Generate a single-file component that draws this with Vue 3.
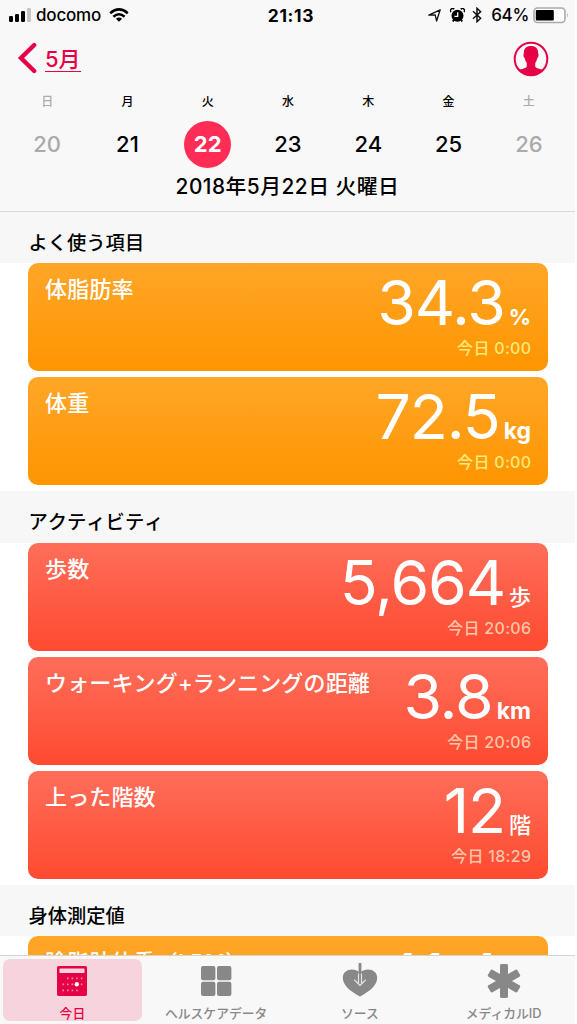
<script setup>
import { reactive } from "vue";

const days = reactive([
  { name: "日", date: 20, off: true },
  { name: "月", date: 21 },
  { name: "火", date: 22, selected: true },
  { name: "水", date: 23 },
  { name: "木", date: 24 },
  { name: "金", date: 25 },
  { name: "土", date: 26, off: true },
]);

const sections = reactive([
  {
    title: "よく使う項目",
    color: "orange",
    cards: [
      { title: "体脂肪率", value: "34.3", unit: "%", unitType: "percentUnit", time: "今日 0:00" },
      { title: "体重", value: "72.5", unit: "kg", unitType: "latin", time: "今日 0:00" },
    ],
  },
  {
    title: "アクティビティ",
    color: "red",
    cards: [
      { title: "歩数", value: "5,664", unit: "歩", time: "今日 20:06" },
      { title: "ウォーキング+ランニングの距離", value: "3.8", unit: "km", unitType: "latin", time: "今日 20:06" },
      { title: "上った階数", value: "12", unit: "階", time: "今日 18:29" },
    ],
  },
  {
    title: "身体測定値",
    color: "orange",
    cards: [
      { title: "除脂肪体重（LBM）", value: "41.4", unit: "kg", unitType: "latin", time: "今日 0:00" },
    ],
  },
]);
</script>

<template>
  <div class="screen">
    <header class="header">
      <div class="status">
        <div class="statusSide">
          <svg class="signal" width="23" height="14" viewBox="0 0 23 14">
            <rect x="0" y="8" width="4" height="6" rx="1.3" />
            <rect x="6" y="6" width="4" height="8" rx="1.3" />
            <rect x="12" y="3" width="4" height="11" rx="1.3" />
            <rect x="18" y="0" width="4" height="14" rx="1.3" fill="#c4c4c4" />
          </svg>
          <span class="carrier">docomo</span>
          <svg width="20" height="14" viewBox="0 0 20 14" fill="none" stroke="#000" stroke-width="2.5">
            <path d="M1.2 5.2Q10-2.4 18.8 5.2" />
            <path d="M4.4 8.8Q10 3.8 15.6 8.8" />
            <path d="M10 13.8L6.9 10.8Q10 8.2 13.1 10.8Z" fill="#000" stroke="none" />
          </svg>
        </div>
        <span class="clock">21:13</span>
        <div class="statusSide right">
          <svg width="13" height="13" viewBox="0 0 13 13" fill="none" stroke="#111" stroke-width="1.3" stroke-linejoin="round">
            <path d="M.8 6.2L12.2 .8L8.6 12L7.2 5.8Z" />
          </svg>
          <svg class="alarm" width="15" height="15" viewBox="0 0 15 15">
            <circle cx="7.5" cy="7.8" r="6" />
            <path d="M1 4A2 2 0 0 1 4.2 1.2M10.8 1.2A2 2 0 0 1 14 4" stroke="#000" stroke-width="1.5" fill="none" />
            <path d="M3.8 12L2.8 13.6M11.2 12L12.2 13.6" stroke="#000" stroke-width="1.8" />
            <path d="M7.7 4.3V8.4H4.4" stroke="#f8f8f8" stroke-width="1.3" fill="none" />
          </svg>
          <svg class="bluetooth" width="10" height="16" viewBox="0 0 10 16" fill="none" stroke="#111" stroke-width="1.5">
            <path d="M1 4.3L8.6 11.3L5 14.7V1.3L8.6 4.7L1 11.7" />
          </svg>
          <span class="percent">64%</span>
          <svg width="36" height="17" viewBox="0 0 36 17">
            <rect x="1" y="1" width="31" height="14.5" rx="3.5" fill="#fff" stroke="#aaa" stroke-width="1.6" />
            <rect x="2.8" y="3" width="18" height="10.6" rx="1" />
            <path d="M34 5.6Q35.8 8.2 34 10.9Z" fill="#aaa" />
          </svg>
        </div>
      </div>

      <div class="nav">
        <a class="back">
          <svg width="20" height="34" viewBox="0 0 20 34" fill="none" stroke="#e60045" stroke-width="4.4">
            <path d="M17.2 4L4 17L17.2 30" stroke-linecap="round" />
          </svg>
          <span class="month">5月</span>
        </a>
        <svg class="profile" width="36" height="36" viewBox="0 0 36 36">
          <circle cx="18" cy="18" r="16.3" fill="#f8f8f8" stroke="#e60045" stroke-width="2" />
          <path d="M18 5C22.8 5 25.4 7.6 25.1 12.3C26.1 12.7 25.4 16.8 24.2 17.2C23.8 19.4 23.1 20.8 22.2 21.9V25.6C23.8 28 27.6 27.8 30.2 29A16.4 16.4 0 0 1 5.8 29C8.4 27.8 12.2 28 13.8 25.6V21.9C12.9 20.8 12.2 19.4 11.8 17.2C10.6 16.8 9.9 12.7 10.9 12.3C10.6 7.6 13.2 5 18 5Z" fill="#e60045" />
        </svg>
      </div>

      <div class="week">
        <div v-for="day in days" :key="day.date" class="day" :class="{ off: day.off, selected: day.selected }">
          <span class="dayName">{{ day.name }}</span>
          <span class="dayDate">{{ day.date }}</span>
        </div>
      </div>
      <p class="fullDate">2018年5月22日 火曜日</p>
    </header>

    <main class="list">
      <section v-for="section in sections" :key="section.title">
        <h2 class="sectionTitle">{{ section.title }}</h2>
        <div v-for="card in section.cards" :key="card.title" class="card" :class="section.color">
          <span class="cardTitle">{{ card.title }}</span>
          <div class="cardData">
            <div class="amount">
              <span class="value">{{ card.value }}</span>
              <span class="unit" :class="card.unitType">{{ card.unit }}</span>
            </div>
            <span class="time">{{ card.time }}</span>
          </div>
        </div>
      </section>
    </main>

    <nav class="tabs">
      <a class="tab active">
        <svg width="36" height="36" viewBox="0 0 36 36">
          <rect x="3" y="3" width="30" height="30" rx="1.8" fill="#e60045" />
          <rect x="5.5" y="5.6" width="25" height="4.4" rx="0.6" fill="#f6d3dd" />
          <g stroke="#f28ba8" stroke-width="1.6" stroke-dasharray="1.6 3">
            <path d="M13 15.4H29" />
            <path d="M8.4 21.4H29" />
            <path d="M8.4 27.4H24" />
          </g>
          <circle cx="22.8" cy="21.3" r="2.2" fill="#fff" />
        </svg>
        <span class="tabLabel">今日</span>
      </a>
      <a class="tab">
        <svg width="36" height="36" viewBox="0 0 36 36" fill="#888">
          <rect x="3" y="3" width="14.4" height="14.2" rx="2" />
          <rect x="19" y="3" width="14.4" height="14.2" rx="2" />
          <rect x="3" y="18.8" width="14.4" height="14.2" rx="2" />
          <rect x="19" y="18.8" width="14.4" height="14.2" rx="2" />
        </svg>
        <span class="tabLabel">ヘルスケアデータ</span>
      </a>
      <a class="tab">
        <svg width="36" height="36" viewBox="0 0 36 36" fill="none">
          <path d="M18 33.6C8 28 .8 22.4 .8 14.8C.8 6.5 11.6 3.8 18 9.8C24.4 3.8 35.2 6.5 35.2 14.8C35.2 22.4 28 28 18 33.6Z" fill="#888" />
          <path d="M18 0V10" stroke="#888" stroke-width="2.8" />
          <path d="M16.5 10.5V21M19.5 10.5V21M12.2 16.8L18 22.4L23.8 16.8" stroke="#e4e4e4" stroke-width="1.2" />
        </svg>
        <span class="tabLabel">ソース</span>
      </a>
      <a class="tab">
        <svg width="36" height="36" viewBox="0 0 36 36" fill="#888">
          <rect x="14" y="1" width="8" height="34" rx="1.4" />
          <rect x="14" y="1" width="8" height="34" rx="1.4" transform="rotate(60 18 18)" />
          <rect x="14" y="1" width="8" height="34" rx="1.4" transform="rotate(-60 18 18)" />
        </svg>
        <span class="tabLabel">メディカルID</span>
      </a>
    </nav>
  </div>
</template>

<style>
body {
  margin: 0;
  background: #fff;
}
</style>

<style scoped>
* {
  box-sizing: border-box;
}
.screen {
  display: flex;
  flex-direction: column;
  width: 575px;
  height: 1024px;
  overflow: hidden;
  color: #000;
  font-family: Inter, "Noto Sans CJK JP", sans-serif;
}
svg {
  display: block;
  flex: none;
}
.header {
  flex: none;
  height: 212px;
  background: #f8f8f8;
  border-bottom: 1px solid #d8d8d8;
}

.status {
  display: grid;
  grid-template-columns: 1fr auto 1fr;
  align-items: center;
  height: 30px;
  padding: 0 6px 0 9px;
}
.statusSide {
  display: flex;
  align-items: center;
}
.right {
  justify-content: flex-end;
}
.carrier {
  margin: 0 8px 0 4px;
  font-size: 17px;
  font-weight: 450;
  letter-spacing: -0.2px;
}
.clock {
  padding-left: 4px;
  font-size: 17.4px;
  font-weight: 700;
  letter-spacing: 0.7px;
}
.alarm {
  margin-left: 9px;
}
.bluetooth {
  margin-left: 7px;
}
.percent {
  margin: 0 4px 0 9px;
  font-size: 17px;
  font-weight: 450;
  letter-spacing: -0.3px;
}

.nav {
  display: flex;
  justify-content: space-between;
  height: 60px;
  padding: 11px 26px 0 17px;
}
.back {
  display: flex;
  gap: 8px;
  height: 36px;
  color: #e60045;
}
.month {
  height: 31px;
  line-height: 36px;
  font-size: 22px;
  font-weight: 500;
  border-bottom: 1px solid #e60045;
}

.week {
  display: grid;
  grid-template-columns: repeat(7, 1fr);
  padding: 0 6px 0 7px;
}
.day {
  display: flex;
  flex-direction: column;
  align-items: center;
}
.dayName {
  height: 31px;
  line-height: 23px;
  font-size: 12px;
  font-weight: 500;
}
.dayDate {
  width: 47px;
  height: 47px;
  line-height: 47px;
  border-radius: 50%;
  text-align: center;
  font-size: 22px;
  font-weight: 500;
}
.off {
  color: #aaa;
}
.selected .dayDate {
  color: #fff;
  background: #ff2d55;
  font-weight: 700;
}
.fullDate {
  margin: 4px 0 0;
  line-height: 30px;
  text-align: center;
  font-size: 20.8px;
  font-weight: 500;
  letter-spacing: 0.5px;
}

.list {
  flex: 1;
  min-height: 0;
  margin-top: -1px;
  padding-top: 1px;
  overflow: hidden;
}
.sectionTitle {
  margin: 0;
  padding: 10px 0 0 28.5px;
  height: 51.8px;
  line-height: 43px;
  background: #f7f7f7;
  font-size: 19.3px;
  font-weight: 500;
  font-kerning: none;
}
section:first-child .sectionTitle {
  height: 50.8px;
}
.card {
  display: flex;
  justify-content: space-between;
  height: 108px;
  margin: 0 27px 6px 28px;
  padding: 0 17px;
  border-radius: 10px;
  color: #fff;
}
.orange {
  background: linear-gradient(#ffa628, #ff9500);
}
.red {
  background: linear-gradient(#ff6e5a, #ff4a30);
}
.cardTitle {
  padding-top: 10px;
  line-height: 32px;
  font-size: 22px;
  font-weight: 500;
  font-kerning: none;
  letter-spacing: 0.15px;
  white-space: nowrap;
}
.cardData {
  display: flex;
  flex-direction: column;
  align-items: flex-end;
}
.amount {
  display: flex;
  align-items: baseline;
  gap: 4px;
  height: 72px;
  line-height: 78.5px;
}
.value {
  font-size: 62.5px;
  font-weight: 400;
  letter-spacing: -1.1px;
}
.unit {
  font-size: 22px;
  font-weight: 500;
}
.percentUnit {
  font-weight: 700;
}
.latin {
  font-size: 23px;
  font-weight: 700;
}
.time {
  line-height: 27px;
  font-size: 16px;
  font-weight: 500;
  letter-spacing: 0.3px;
  margin-right: -0.3px;
}
.orange .time {
  color: #ffe976;
}
.red .time {
  color: #ffc5a8;
}

.tabs {
  display: grid;
  grid-template-columns: repeat(4, 1fr);
  flex: none;
  height: 69px;
  border-top: 1px solid #d4d4d4;
  background: #f8f8f8;
}
.tab {
  display: flex;
  flex-direction: column;
  align-items: center;
  height: 62px;
  margin: 3px 2px 3px 3px;
  padding-top: 4px;
  border-radius: 7px;
  color: #888;
}
.tabLabel {
  margin-top: 4px;
  line-height: 22px;
  font-size: 12.8px;
  font-weight: 500;
  white-space: nowrap;
}
.active {
  background: #f6d3dd;
  color: #e60045;
}
</style>
